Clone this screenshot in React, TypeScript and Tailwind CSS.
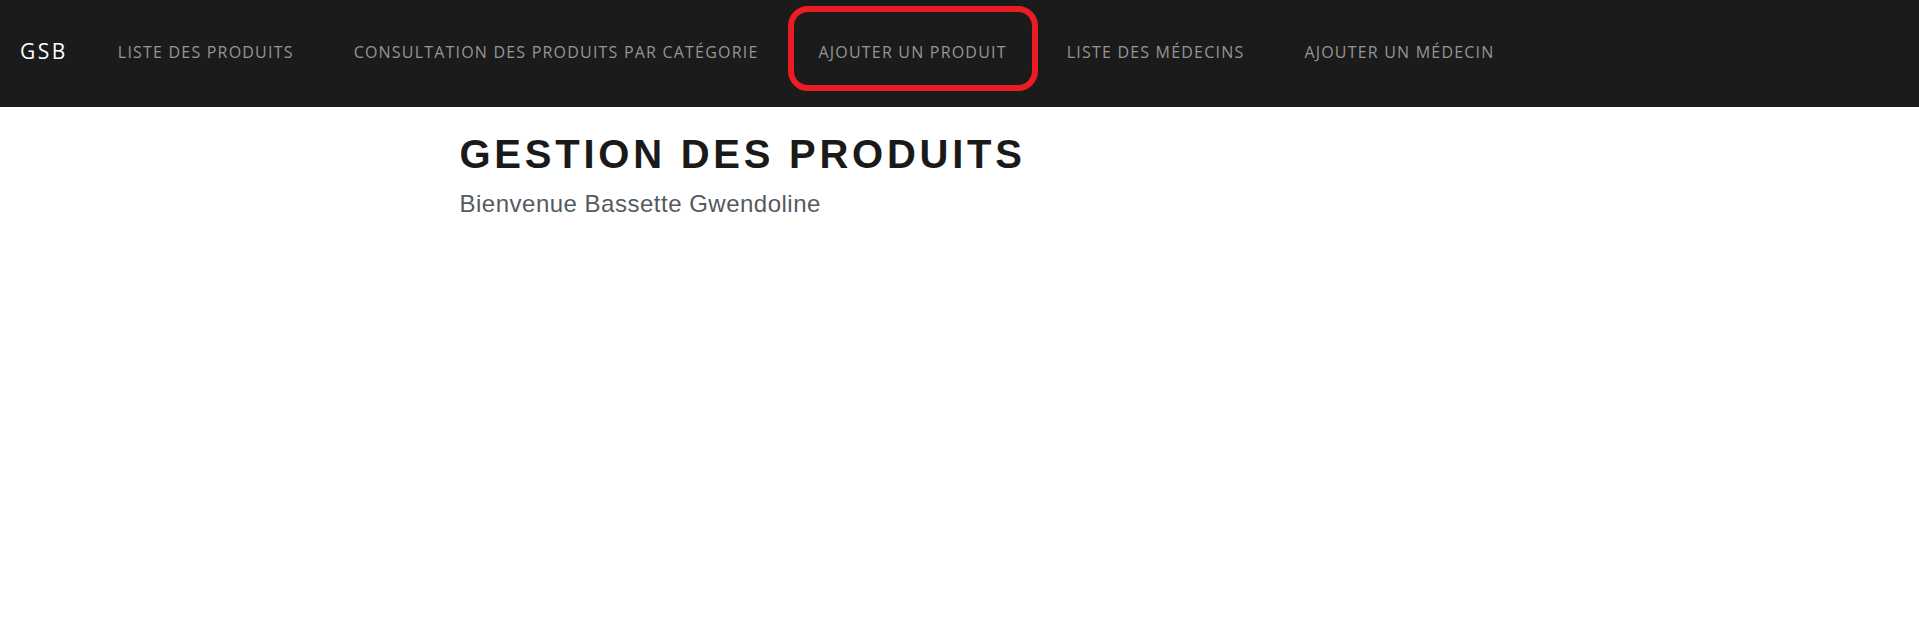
import React from 'react';

const links = [
  'Liste des produits',
  'Consultation des produits par catégorie',
  'Ajouter un produit',
  'Liste des médecins',
  'Ajouter un médecin',
];

const App: React.FC = () => {
  return (
    <div className="min-h-[619px] bg-white">
      {/* Navbar */}
      <nav className="relative h-[107px] bg-[#1b1b1b] flex items-center pl-[20px] pb-[4px] font-['Open_Sans',sans-serif]">
        <span className="text-[21px] text-white tracking-[2.5px] mr-[20px]">GSB</span>
        <ul className="flex items-center">
          {links.map((l) => (
            <li key={l} className="px-[30px] text-[16px] uppercase tracking-[1.2px] text-[#959595]">
              {l}
            </li>
          ))}
        </ul>
        {/* annotation */}
        <div className="absolute left-[788px] top-[6px] w-[250px] h-[85px] border-[6px] border-[#ec1c24] rounded-[20px]"></div>
      </nav>

      {/* Header */}
      <div className="w-[1000px] mx-auto pt-[23px] font-['Liberation_Sans',Arial,sans-serif]">
        <h1 className="text-[40px] leading-[48px] font-bold uppercase tracking-[3.75px] text-[#1a1a1a]">
          Gestion des produits
        </h1>
        <p className="mt-[9px] text-[24px] leading-[33px] tracking-[0.5px] text-[#555a5f]">
          Bienvenue Bassette Gwendoline
        </p>
      </div>
    </div>
  );
};

export default App;
